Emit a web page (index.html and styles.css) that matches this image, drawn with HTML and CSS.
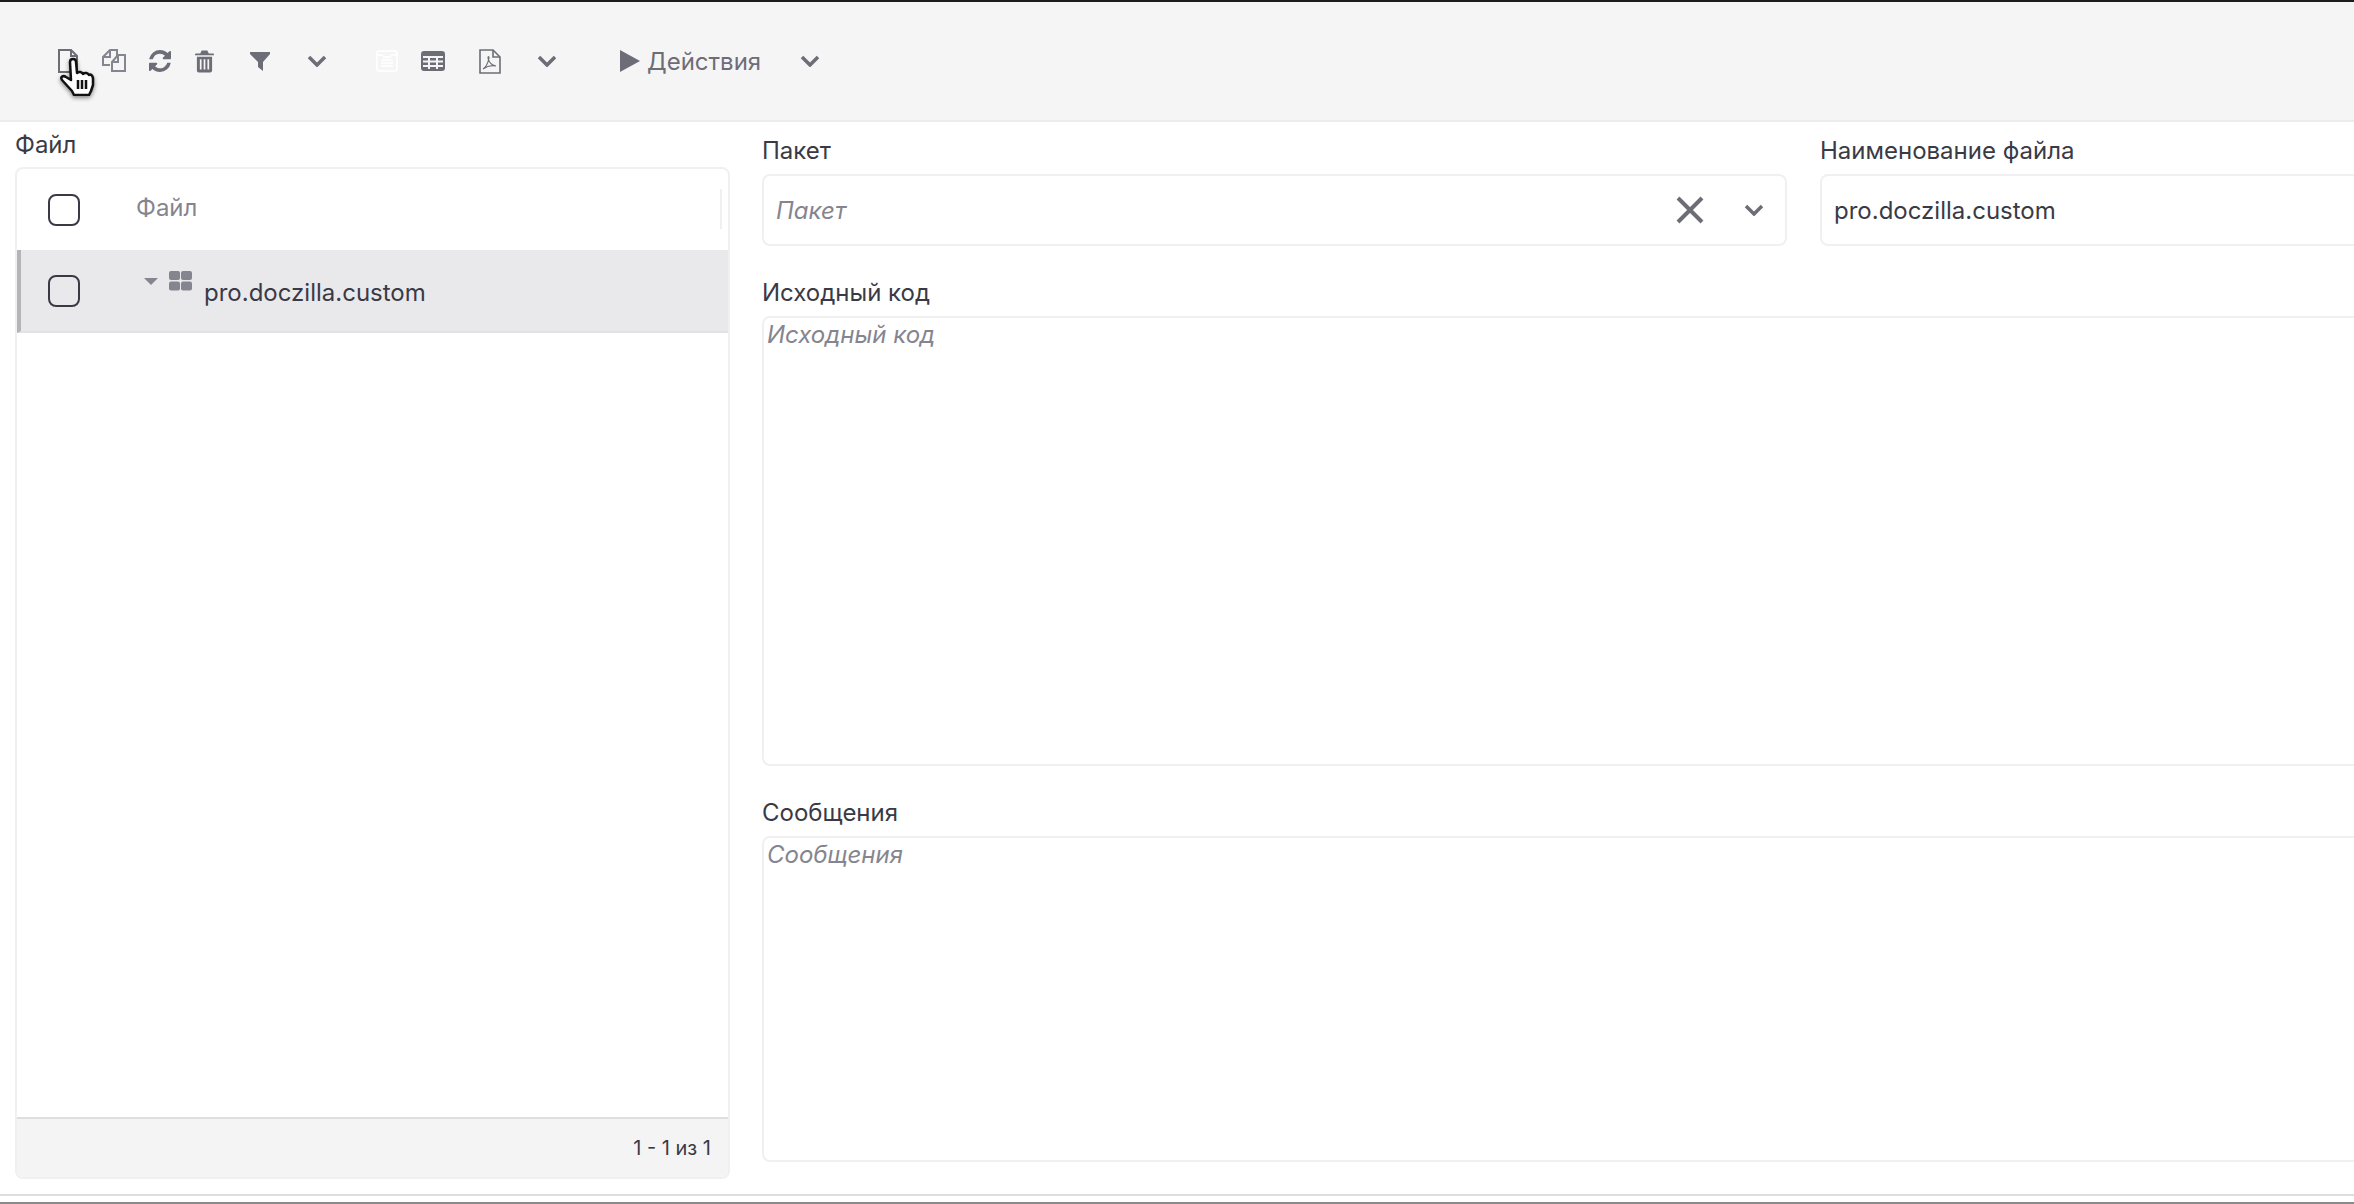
FILE: index.html

```html
<!DOCTYPE html>
<html lang="ru">
<head>
  <meta charset="UTF-8">
  <title>Файл</title>
  <link rel="stylesheet" href="styles.css">
</head>
<body>

  <div class="app">
    <div class="toolbar">
      <div class="tool-group">
        <button class="tool">
          <svg width="24" height="26" viewBox="0 0 24 26" fill="none" stroke="#6d6d78" stroke-width="2"><path d="M3 2h12l6 6v16H3z"/><path d="M15 2v6h6"/></svg>
        </button>
        <button class="tool">
          <svg width="26" height="26" viewBox="0 0 26 26" fill="none" stroke="#85858f" stroke-width="2"><path d="M9 17H2V9l7-7h7v6"/><path d="M9 2v7H2"/><path d="M11 14l6-7h7v16H11z"/><path d="M17 7v7h-6"/></svg>
        </button>
        <button class="tool">
          <svg width="22" height="22" viewBox="0 0 1536 1536" fill="#6d6d78"><path d="M1511 928q0 5-1 7-64 268-268 434.500T764 1536q-146 0-282.500-55T238 1324l-129 129q-19 19-45 19t-45-19-19-45V960q0-26 19-45t45-19h448q26 0 45 19t19 45-19 45L420 1142q71 66 161 102t187 36q134 0 250-65t186-179q11-17 53-117 8-23 30-23h192q13 0 22.500 9.500T1511 928zm25-800v448q0 26-19 45t-45 19h-448q-26 0-45-19t-19-45 19-45l138-138q-148-137-349-137-134 0-250 65T332 500q-11 17-53 117-8 23-30 23H50q-13 0-22.500-9.500T18 608v-7q65-268 270-434.500T768 0q146 0 284 55.500T1297 212l130-129q19-19 45-19t45 19 19 45z"/></svg>
        </button>
        <button class="tool tool-trash">
          <svg width="19" height="23" viewBox="0 0 20 23" fill="#6d6d78"><path d="M7 0h6l1.500 3H19a1 1 0 0 1 1 1v1H0V4a1 1 0 0 1 1-1h4.500zM2 6.500h16V21a2 2 0 0 1-2 2H4a2 2 0 0 1-2-2z"/><path d="M6 9v11M10 9v11M14 9v11" stroke="#f5f5f6" stroke-width="1.800"/></svg>
        </button>
      </div>
      <div class="tool-group gap-xs">
        <button class="tool">
          <svg width="20" height="20" viewBox="0 0 20 20" fill="#6d6d78"><path d="M0 1h20v2l-7 8v9l-5-4v-5L0 3z"/></svg>
        </button>
      </div>
      <div class="tool-group gap-s">
        <button class="tool">
          <svg class="chevron" width="20" height="12" viewBox="0 0 20 12"><path d="M2 2l8 8 8-8"/></svg>
        </button>
      </div>
      <div class="tool-group gap-m">
        <button class="tool">
          <svg width="22" height="22" viewBox="0 0 22 22" fill="none" stroke="#fff" stroke-width="1.600"><rect x="1" y="1" width="20" height="20" rx="2"/><path d="M1 5h5l2 2h6l2-2h5M5 10h12M5 13h12M5 16h12"/></svg>
        </button>
        <button class="tool">
          <svg width="24" height="20" viewBox="0 0 24 20"><rect width="24" height="20" rx="3" fill="#6d6d78"/><path d="M2 6h20M2 10.500h20M2 15h20M8 6v12M16 6v12" stroke="#f5f5f6" stroke-width="2"/></svg>
        </button>
      </div>
      <div class="tool-group gap-s">
        <button class="tool">
          <svg width="22" height="25" viewBox="0 0 22 25" fill="none" stroke="#6d6d78" stroke-width="1.600"><path d="M1 1h13l7 7v16H1z"/><path d="M14 1v7h7"/><path d="M4 20c3-2 5-6 6-11 0-2-1-2-1 0 1 5 3 7 8 8-4-1-9 0-13 3z" stroke-width="1.200"/></svg>
        </button>
      </div>
      <div class="tool-group gap-s">
        <button class="tool">
          <svg class="chevron" width="20" height="12" viewBox="0 0 20 12"><path d="M2 2l8 8 8-8"/></svg>
        </button>
      </div>
      <button class="action">
        <svg width="20" height="22" viewBox="0 0 20 22" fill="#6d6d78"><path d="M0 0l20 11L0 22z"/></svg>
        <span>Действия</span>
      </button>
      <div class="tool-group gap-action">
        <button class="tool">
          <svg class="chevron" width="20" height="12" viewBox="0 0 20 12"><path d="M2 2l8 8 8-8"/></svg>
        </button>
      </div>
    </div>

    <svg class="cursor" width="38" height="40" viewBox="0 0 38 40">
      <path d="M12 6c0-4 6-4 6 0l1 11c2-2 5-1 6 1 2-2 5-1 6 1 2-1 3 0 4 3v7l-2 6-2 4H16l-2-4L4 24c-2-3 1-5 4-3l5 3z" fill="#fff" stroke="#111" stroke-width="2.500" stroke-linejoin="round"/>
      <path d="M20 24v9M24 24v9M28 24v9" stroke="#111" stroke-width="2.500"/>
    </svg>

    <div class="content">
      <div class="file-panel">
        <div class="panel-title">Файл</div>
        <div class="grid">
          <div class="grid-head">
            <div class="check-cell"><span class="check"></span></div>
            <div class="head-title">Файл</div>
            <span class="head-sep"></span>
          </div>
          <div class="grid-row">
            <div class="check-cell"><span class="check"></span></div>
            <span class="tree-arrow"></span>
            <svg class="pkg-icon" width="23" height="20" viewBox="0 0 23 20" fill="#85858f"><rect width="11" height="9" rx="2"/><rect x="12" width="11" height="9" rx="2"/><rect y="10.500" width="11" height="9" rx="2"/><rect x="12" y="10.500" width="11" height="9" rx="2"/></svg>
            <span class="row-text">pro.doczilla.custom</span>
          </div>
          <div class="grid-space"></div>
          <div class="grid-foot">1 - 1 из 1</div>
        </div>
      </div>

      <div class="form">
        <div class="form-row">
          <div class="field field-package">
            <label>Пакет</label>
            <div class="input-box">
              <span class="placeholder">Пакет</span>
              <svg class="clear" width="28" height="28" viewBox="0 0 28 28"><path d="M2 2l24 24M26 2L2 26"/></svg>
              <svg class="select-arrow" width="20" height="12" viewBox="0 0 20 12"><path d="M2 2l8 8 8-8"/></svg>
            </div>
          </div>
          <div class="field field-name">
            <label>Наименование файла</label>
            <div class="input-box"><span class="value">pro.doczilla.custom</span></div>
          </div>
        </div>
        <div class="field field-text">
          <label>Исходный код</label>
          <div class="text-box code-box"><span class="placeholder">Исходный код</span></div>
        </div>
        <div class="field field-text">
          <label>Сообщения</label>
          <div class="text-box msg-box"><span class="placeholder">Сообщения</span></div>
        </div>
      </div>
    </div>

    <div class="bottom-line"></div>
  </div>

</body>
</html>
```

FILE: styles.css

```css
html, body {
  margin: 0;
  height: 100%;
  overflow: hidden;
}

body {
  font-family: Inter, "Noto Sans", sans-serif;
  font-size: 24px;
  color: #3a3a46;
  background: #fff;
}

.app {
  position: relative;
  height: 1204px;
  display: flex;
  flex-direction: column;
  overflow: hidden;
}

.toolbar {
  height: 118px;
  flex: none;
  display: flex;
  align-items: center;
  padding-left: 45px;
  background: #f5f5f6;
  border-top: 2px solid #1c1c1c;
  border-bottom: 2px solid #ececec;
}

.tool-group {
  display: flex;
}

.gap-xs {
  margin-left: 8px;
}

.gap-s {
  margin-left: 11px;
}

.gap-m {
  margin-left: 24px;
}

.gap-action {
  margin-left: 26px;
}

.tool {
  width: 46px;
  height: 46px;
  padding: 0;
  border: none;
  background: none;
  display: flex;
  align-items: center;
  justify-content: center;
}

.tool-trash {
  padding-right: 4px;
}

.chevron {
  fill: none;
  stroke: #6d6d78;
  stroke-width: 3.500;
}

.action {
  margin-left: 50px;
  padding: 0;
  border: none;
  background: none;
  display: flex;
  align-items: center;
  gap: 7px;
  font: inherit;
  color: #6d6d78;
}

.cursor {
  position: absolute;
  left: 58px;
  top: 56px;
  filter: drop-shadow(0 2px 2px rgba(0, 0, 0, 0.45));
}

.content {
  flex: 1;
  display: flex;
  min-height: 0;
}

.file-panel {
  width: 715px;
  flex: none;
  margin-left: 15px;
  display: flex;
  flex-direction: column;
}

.panel-title {
  height: 45px;
  line-height: 46px;
}

.grid {
  height: 1012px;
  box-sizing: border-box;
  display: flex;
  flex-direction: column;
  border: 2px solid #f0f0f0;
  border-radius: 8px;
}

.grid-head {
  position: relative;
  height: 81px;
  flex: none;
  display: flex;
  align-items: center;
}

.head-title {
  margin-left: -5px;
  margin-top: -5px;
  color: #85858f;
}

.head-sep {
  position: absolute;
  right: 6px;
  top: 20px;
  height: 40px;
  border-right: 2px solid #f0f0f0;
}

.check-cell {
  width: 124px;
  flex: none;
  padding-left: 31px;
  box-sizing: border-box;
}

.check {
  display: block;
  width: 32px;
  height: 32px;
  box-sizing: border-box;
  border: 2px solid #3a3a46;
  border-radius: 8px;
}

.grid-row {
  height: 83px;
  flex: none;
  box-sizing: border-box;
  display: flex;
  align-items: center;
  background: #e9e9ec;
  border-left: 4px solid #b4b4b8;
  border-bottom: 2px solid #e2e2e4;
}

.grid-row .check-cell {
  width: 123px;
  padding-left: 27px;
  padding-top: 1px;
}

.tree-arrow {
  width: 0;
  height: 0;
  margin-top: -19px;
  border-left: 7px solid transparent;
  border-right: 7px solid transparent;
  border-top: 7px solid #85858f;
}

.pkg-icon {
  margin-left: 11px;
  margin-top: -20px;
}

.row-text {
  margin-left: 12px;
  margin-top: 3px;
}

.grid-space {
  flex: 1;
}

.grid-foot {
  height: 60px;
  flex: none;
  box-sizing: border-box;
  padding-right: 17px;
  display: flex;
  align-items: center;
  justify-content: flex-end;
  font-size: 20px;
  background: #f4f4f4;
  border-top: 2px solid #dedede;
  border-radius: 0 0 6px 6px;
}

.form {
  width: 1900px;
  flex: none;
  margin-left: 32px;
}

.form-row {
  display: flex;
  gap: 33px;
}

.field label {
  display: block;
  height: 52px;
  padding-top: 15px;
  box-sizing: border-box;
  line-height: 28px;
}

.field-text {
  margin-top: 18px;
}

.field-package {
  width: 1025px;
  flex: none;
}

.field-name {
  flex: 1;
}

.input-box {
  height: 72px;
  box-sizing: border-box;
  display: flex;
  align-items: center;
  padding: 0 21px 0 12px;
  border: 2px solid #f0f0f0;
  border-radius: 8px;
}

.placeholder {
  font-style: italic;
  color: #85858f;
}

.clear {
  margin-left: auto;
  fill: none;
  stroke: #6d6d78;
  stroke-width: 4;
}

.select-arrow {
  margin-left: 40px;
  fill: none;
  stroke: #6d6d78;
  stroke-width: 3.500;
}

.text-box {
  box-sizing: border-box;
  padding: 2px 3px;
  border: 2px solid #f0f0f0;
  border-radius: 8px;
}

.code-box {
  height: 450px;
}

.msg-box {
  height: 326px;
}

.bottom-line {
  position: absolute;
  left: 0;
  right: 0;
  top: 1194px;
  height: 2px;
  background: #dedede;
  box-shadow: 0 8px 0 #8a8a8a;
}
```
